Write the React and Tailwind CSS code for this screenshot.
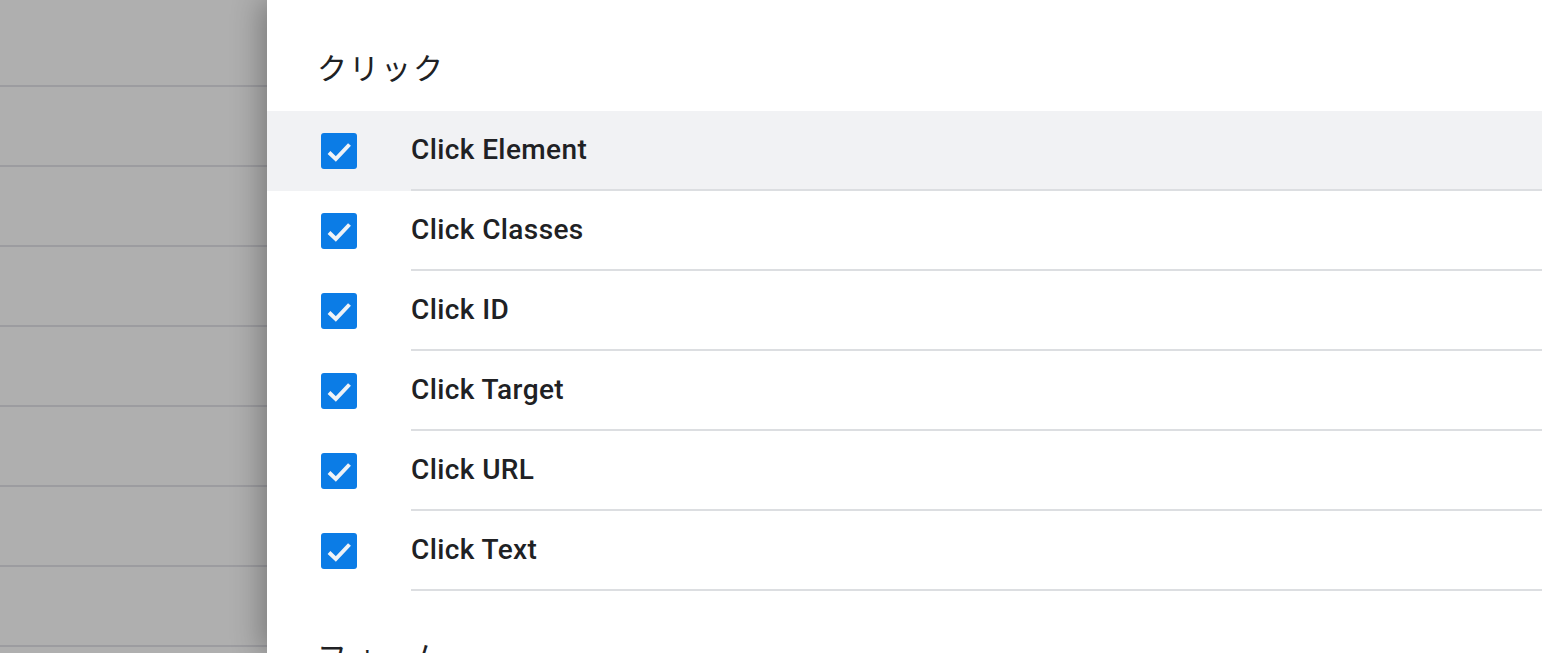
import React from 'react';

const CLICK_VARS = ['Click Element', 'Click Classes', 'Click ID', 'Click Target', 'Click URL', 'Click Text'];

function CheckBox() {
  return (
    <div className="w-9 h-9 rounded-[3px] bg-[#0b7ce6] flex items-center justify-center">
      <svg width="36" height="36" viewBox="0 0 36 36" fill="none">
        <path d="M8 19.5 L14.8 26 L28.5 11.5" stroke="#eef2f7" strokeWidth="4" strokeLinejoin="miter" />
      </svg>
    </div>
  );
}

function VarRow({ label, active }) {
  return (
    <div className={`flex h-20 items-stretch ${active ? 'bg-[#f1f2f4]' : ''}`}>
      <div className="w-[144px] shrink-0 pl-[54px] flex items-center">
        <CheckBox />
      </div>
      <div className="flex-1 flex items-center border-b-2 border-[#dcdee1]">
        <span className="text-[28px] font-medium tracking-[0.4px] text-[#202124] leading-none" style={{ fontFamily: 'Roboto, "Noto Sans", sans-serif' }}>
          {label}
        </span>
      </div>
    </div>
  );
}

export default function App() {
  const jp = { fontFamily: '"Noto Sans CJK JP", "Noto Sans", sans-serif' };

  return (
    <div className="flex h-screen w-full overflow-hidden bg-white">
      <div className="w-[267px] shrink-0 bg-[#afafaf] flex flex-col">
        <div className="h-[87px] shrink-0 border-b-2 border-[#9c9ca0]" />
        {[0, 1, 2, 3, 4, 5, 6, 7].map((i) => (
          <div key={i} className="h-20 shrink-0 border-b-2 border-[#9c9ca0]" />
        ))}
      </div>

      <div className="relative z-10 flex-1 bg-white shadow-[-6px_0_28px_rgba(0,0,0,0.3)]">
        <div className="h-[111px] pl-[50px] pt-[46px]">
          <h2 className="text-[30px] leading-[40px] tracking-[2px] text-[#202124] font-normal" style={jp}>クリック</h2>
        </div>
        <div className="flex flex-col">
          {CLICK_VARS.map((v, i) => (
            <VarRow key={v} label={v} active={i === 0} />
          ))}
        </div>
        <div className="pl-[50px] pt-[44px]">
          <h2 className="text-[30px] leading-[40px] tracking-[2px] text-[#202124] font-normal" style={jp}>フォーム</h2>
        </div>
      </div>
    </div>
  );
}
